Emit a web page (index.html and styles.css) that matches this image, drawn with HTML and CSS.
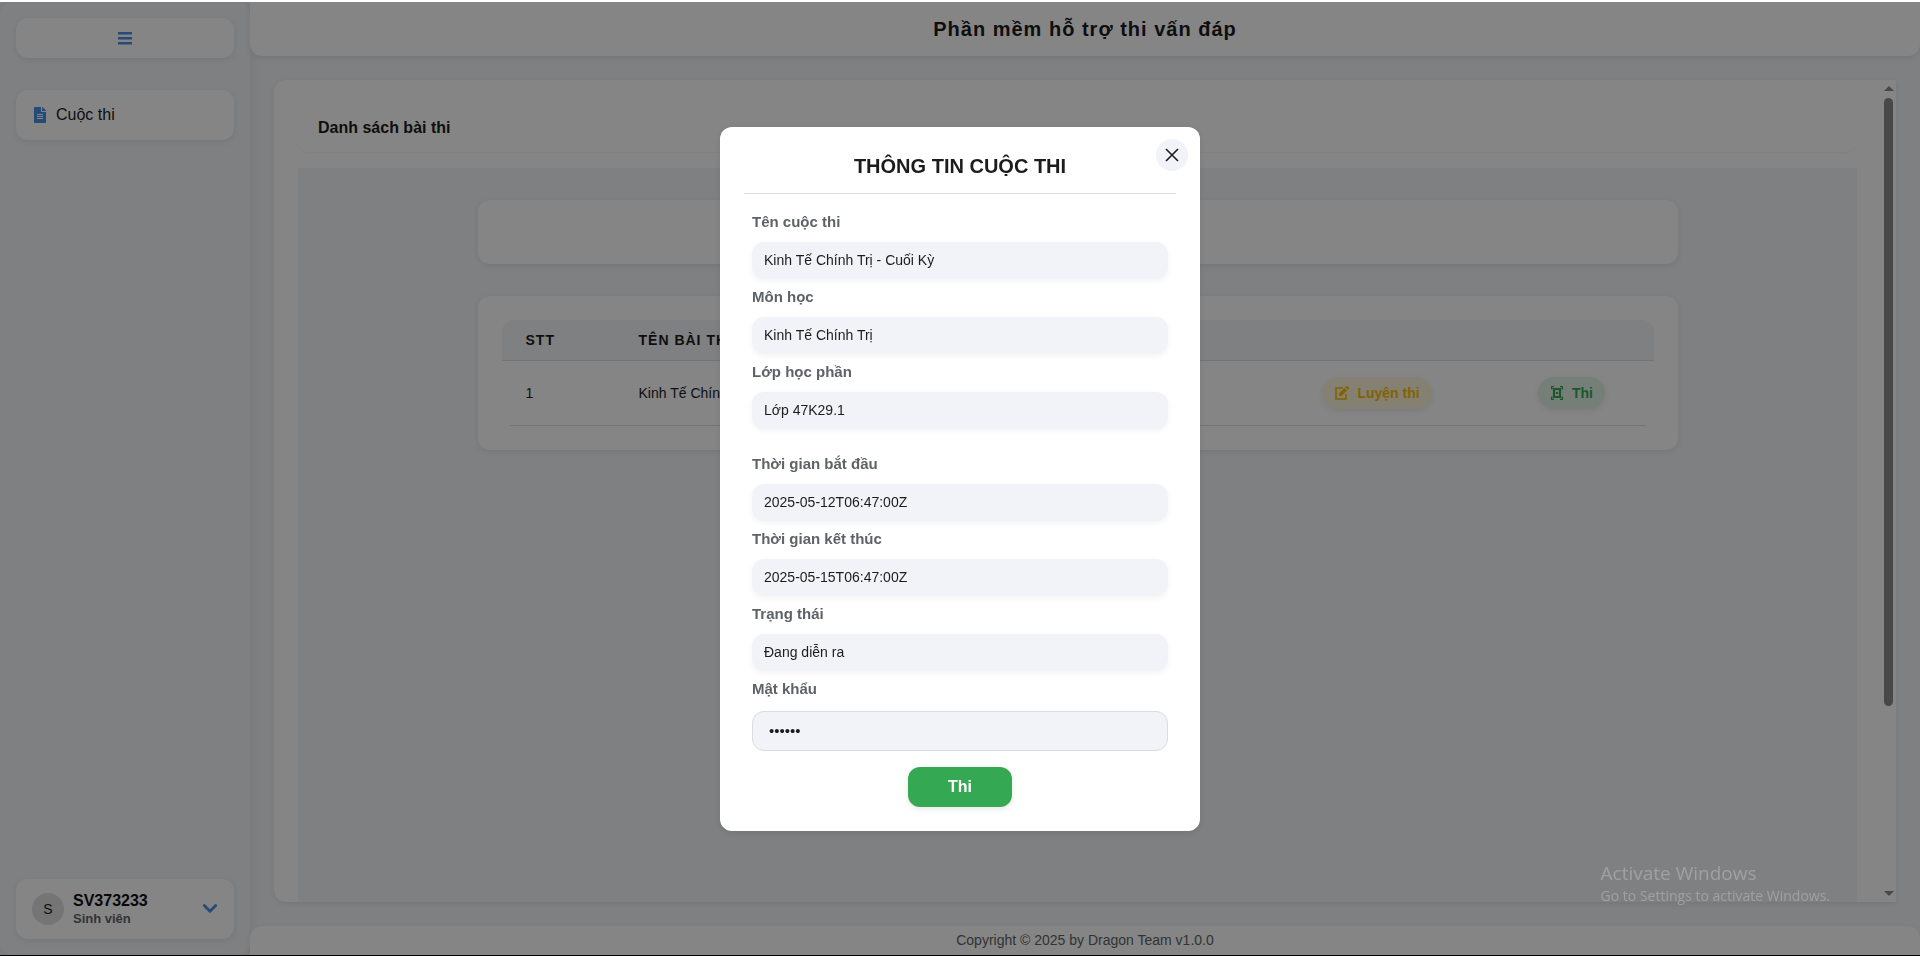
FILE: index.html
```html
<!DOCTYPE html>
<html lang="vi">
<head>
<meta charset="utf-8">
<title>Phần mềm hỗ trợ thi vấn đáp</title>
<link rel="stylesheet" href="styles.css">
</head>
<body>
<div class="app">
  <aside class="sidebar">
    <button class="menu-toggle" type="button" aria-label="Menu">
      <svg class="menu-icon" viewBox="0 0 14 14" aria-hidden="true"><path d="M0 1h14v2.400H0zM0 6h14v2.400H0zM0 11h14v2.400H0z" fill="currentColor"/></svg>
    </button>
    <nav class="nav">
      <a class="nav-link" href="#">
        <svg class="nav-icon" viewBox="0 0 384 512" aria-hidden="true"><path fill="currentColor" d="M224 136V0H24C10.700 0 0 10.700 0 24v464c0 13.300 10.700 24 24 24h336c13.300 0 24-10.700 24-24V160H248c-13.200 0-24-10.800-24-24zm64 236c0 6.600-5.400 12-12 12H108c-6.600 0-12-5.400-12-12v-8c0-6.600 5.400-12 12-12h168c6.600 0 12 5.400 12 12v8zm0-64c0 6.600-5.400 12-12 12H108c-6.600 0-12-5.400-12-12v-8c0-6.600 5.400-12 12-12h168c6.600 0 12 5.400 12 12v8zm0-72v8c0 6.600-5.400 12-12 12H108c-6.600 0-12-5.400-12-12v-8c0-6.600 5.400-12 12-12h168c6.600 0 12 5.400 12 12zm96-114.100v6.100H256V0h6.100c6.400 0 12.500 2.500 17 7l97.900 98c4.500 4.500 7 10.600 7 16.900z"/></svg>
        <span>Cuộc thi</span>
      </a>
    </nav>
    <button class="user-card" type="button">
      <span class="avatar">S</span>
      <span class="user-text">
        <span class="user-name">SV373233</span>
        <span class="user-role">Sinh viên</span>
      </span>
      <svg class="chevron" viewBox="0 0 14 10" aria-hidden="true"><path d="M2 2l5 5 5-5" fill="none" stroke="currentColor" stroke-width="2.500" stroke-linecap="round" stroke-linejoin="round"/></svg>
    </button>
  </aside>
  <div class="page">
    <header class="topbar"><h1 class="app-title">Phần mềm hỗ trợ thi vấn đáp</h1></header>
    <main class="content">
      <div class="panel">
        <h2 class="panel-title">Danh sách bài thi</h2>
        <div class="board">
          <section class="card filter-card"></section>
          <section class="card table-card">
            <table class="exam-table">
              <thead>
                <tr><th class="col-no">STT</th><th>TÊN BÀI THI</th><th class="col-action"></th><th class="col-action"></th></tr>
              </thead>
              <tbody>
                <tr>
                  <td>1</td>
                  <td>Kinh Tế Chính Trị - Cuối Kỳ</td>
                  <td class="action">
                    <button class="pill pill-practice" type="button">
                      <svg class="pill-icon" viewBox="0 0 14 14" aria-hidden="true"><path d="M8 2H1v11h10V8" fill="none" stroke="currentColor" stroke-width="1.600"/><path d="M4 10V7.500L9.500 2 12 4.500 6.500 10zM10.200 1.300L11.300.2a.8.8 0 011.100 0l1.400 1.400a.8.8 0 010 1.100l-1.100 1.100z" fill="currentColor"/></svg>
                      Luyện thi
                    </button>
                  </td>
                  <td class="action">
                    <button class="pill pill-exam" type="button">
                      <svg class="pill-icon" viewBox="0 0 14 14" aria-hidden="true"><g fill="none" stroke="currentColor"><path d="M1.600 3.500V.7h2.400M10 .7h2.400v2.800M12.400 10.500v2.800H10M4 13.300H1.600v-2.800" stroke-width="1.300"/><path d="M4 3h6v8H4z" stroke-width="2.200"/></g><path d="M2 2l3 2-1 1zM12 2L9 4l1 1zM2 12l3-2-1-1zM12 12l-3-2 1-1zM6 6h2v2H6z" fill="currentColor"/></svg>
                      Thi
                    </button>
                  </td>
                </tr>
              </tbody>
            </table>
          </section>
        </div>
        <div class="scrollbar" aria-hidden="true">
          <span class="arrow arrow-up"></span><span class="thumb"></span><span class="arrow arrow-down"></span>
        </div>
      </div>
    </main>
    <footer class="footer">Copyright © 2025 by Dragon Team v1.0.0</footer>
  </div>
</div>
<div class="overlay">
  <form class="modal" role="dialog" aria-modal="true" aria-labelledby="modal-title">
    <button class="close" type="button" aria-label="Đóng">
      <svg class="close-icon" viewBox="0 0 14 14" aria-hidden="true"><path d="M1 1l12 12M13 1L1 13" stroke="currentColor" stroke-width="1.600" fill="none"/></svg>
    </button>
    <h2 class="modal-title" id="modal-title">THÔNG TIN CUỘC THI</h2>
    <div class="fields">
      <dl class="group">
        <dt>Tên cuộc thi</dt><dd>Kinh Tế Chính Trị - Cuối Kỳ</dd>
        <dt>Môn học</dt><dd>Kinh Tế Chính Trị</dd>
        <dt>Lớp học phần</dt><dd>Lớp 47K29.1</dd>
      </dl>
      <dl class="group">
        <dt>Thời gian bắt đầu</dt><dd>2025-05-12T06:47:00Z</dd>
        <dt>Thời gian kết thúc</dt><dd>2025-05-15T06:47:00Z</dd>
        <dt>Trạng thái</dt><dd>Đang diễn ra</dd>
      </dl>
      <label class="password-label" for="password">Mật khẩu</label>
      <input class="password" id="password" type="password" value="123456">
    </div>
    <button class="submit" type="button">Thi</button>
  </form>
</div>
<div class="watermark"><div class="watermark-title">Activate Windows</div><div>Go to Settings to activate Windows.</div></div>
</body>
</html>
```
FILE: styles.css
```css
* { box-sizing: border-box; }
body {
  margin: 0;
  font-family: "Liberation Sans", Arial, sans-serif;
  font-size: 14px;
  color: #1c1c1c;
  background: #f3f5f8;
}
button, input { font: inherit; color: inherit; border: 0; margin: 0; }
h1, h2, dl, dd { margin: 0; }
.app {
  display: flex;
  height: 100vh;
  border-top: 2px solid #fff;
  border-bottom: 1px solid #000;
  overflow: hidden;
}
.sidebar {
  display: flex;
  flex-direction: column;
  flex: 0 0 250px;
  padding: 16px;
  border-radius: 12px;
  box-shadow: 0 0 12px rgba(0, 0, 0, .08);
}
.menu-toggle, .nav-link, .user-card {
  background: #fff;
  border-radius: 12px;
  box-shadow: 0 2px 6px rgba(0, 0, 0, .08);
}
.menu-toggle {
  display: flex;
  align-items: center;
  justify-content: center;
  height: 40px;
  color: #4a90e2;
}
.menu-icon { width: 14px; height: 14px; }
.nav { flex: 1; padding-top: 32px; }
.nav-link {
  display: flex;
  align-items: center;
  gap: 10px;
  height: 50px;
  padding: 0 18px;
  font-size: 16px;
  color: inherit;
  text-decoration: none;
}
.nav-icon { width: 12px; height: 16px; color: #4a90e2; }
.user-card {
  display: flex;
  align-items: center;
  gap: 9px;
  height: 60px;
  padding: 0 16px;
  text-align: left;
}
.avatar {
  display: grid;
  place-items: center;
  width: 32px;
  height: 32px;
  border-radius: 50%;
  background: #e0e0e0;
}
.user-text { display: flex; flex-direction: column; flex: 1; font-weight: 700; }
.user-name { font-size: 16px; line-height: 18px; color: #111; }
.user-role { font-size: 13px; line-height: 17px; color: #5f6368; }
.chevron { width: 16px; height: 12px; color: #4a90e2; }
.page { display: flex; flex-direction: column; flex: 1; min-width: 0; }
.topbar, .footer {
  display: flex;
  align-items: center;
  justify-content: center;
  background: #fff;
  box-shadow: 0 2px 6px rgba(0, 0, 0, .08);
}
.topbar { flex: 0 0 54px; border-radius: 0 0 12px 12px; }
.app-title { font-size: 20px; letter-spacing: 1px; }
.footer { flex: 0 0 29px; padding-bottom: 2px; border-radius: 12px 12px 0 0; color: #5f6368; }
.content { flex: 1; min-height: 0; padding: 24px; }
.panel {
  position: relative;
  display: flex;
  flex-direction: column;
  height: 100%;
  padding: 24px 39px 0 24px;
  background: #fff;
  border-radius: 12px 0 0 12px;
  box-shadow: 0 2px 6px rgba(0, 0, 0, .08);
}
.panel-title {
  display: flex;
  align-items: center;
  height: 48px;
  margin-bottom: 16px;
  padding: 0 20px;
  font-size: 16px;
  border-radius: 12px;
  box-shadow: 0 1px 2px rgba(0, 0, 0, .04);
}
.board { flex: 1; padding: 32px 24px; background: #f3f5f8; }
.card {
  max-width: 1200px;
  margin: 0 auto 32px;
  padding: 24px;
  background: #fff;
  border-radius: 12px;
  box-shadow: 0 2px 6px rgba(0, 0, 0, .08);
}
.filter-card { height: 64px; }
.exam-table { width: 100%; border-collapse: separate; border-spacing: 0; table-layout: fixed; }
.exam-table th {
  height: 41px;
  padding: 0 24px;
  text-align: left;
  font-size: 14px;
  letter-spacing: 1px;
  background: #f3f5f8;
  border-bottom: 1px solid #dadce0;
}
.exam-table th:first-child { border-top-left-radius: 12px; }
.exam-table th:last-child { border-top-right-radius: 12px; }
.exam-table td {
  height: 65px;
  padding: 0 24px 2px;
  background: linear-gradient(#dadce0, #dadce0) bottom / 100% 1px no-repeat;
}
.exam-table td:first-child { background-position: right bottom; background-size: calc(100% - 8px) 1px; }
.exam-table td:last-child { background-position: left bottom; background-size: calc(100% - 8px) 1px; }
.exam-table .col-no { width: 113px; }
.exam-table .col-action { width: 194px; }
.exam-table .action { padding: 0 8px 2px 38px; text-align: center; }
.pill {
  display: inline-flex;
  align-items: center;
  gap: 8px;
  height: 32px;
  padding: 0 12px;
  border-radius: 16px;
  font-weight: 700;
  box-shadow: 0 2px 6px rgba(0, 0, 0, .08);
}
.pill-icon { width: 14px; height: 14px; }
.pill-practice { color: #fbbc05; background: #fef5da; }
.pill-exam { color: #34a853; background: #e1f3e5; }
.scrollbar {
  position: absolute;
  inset: 0 0 0 auto;
  display: flex;
  flex-direction: column;
  align-items: center;
  width: 15px;
  padding: 6px 0;
}
.arrow { border: 5px solid transparent; }
.arrow-up { border-top: 0; border-bottom-color: #8b8b8b; }
.arrow-down { border-bottom: 0; border-top-color: #8b8b8b; margin-top: auto; }
.thumb { width: 9px; height: 75%; margin-top: 7px; border-radius: 5px; background: #8b8b8b; }
.overlay {
  position: fixed;
  inset: 2px 0 1px;
  display: grid;
  place-items: center;
  background: rgba(0, 0, 0, .48);
}
.modal {
  position: relative;
  display: flex;
  flex-direction: column;
  width: 480px;
  padding: 24px;
  background: #fff;
  border-radius: 12px;
  box-shadow: 0 2px 8px rgba(0, 0, 0, .1);
}
.close {
  position: absolute;
  top: 12px;
  right: 12px;
  display: grid;
  place-items: center;
  width: 32px;
  height: 32px;
  padding: 0;
  border-radius: 50%;
  background: #f2f3f8;
}
.close-icon { width: 14px; height: 14px; }
.modal-title {
  padding-bottom: 12px;
  border-bottom: 1px solid #dadce0;
  font-size: 20px;
  line-height: 30px;
  text-align: center;
}
.fields { display: flex; flex-direction: column; padding: 18px 8px 16px; }
.group { margin-bottom: 17px; }
.group + .group { margin-bottom: 0; }
dt, .password-label {
  padding: 1px 0 12px;
  font-size: 15px;
  font-weight: 700;
  line-height: 17px;
  color: #5f6368;
}
.password-label { padding-bottom: 14px; }
dd {
  margin-bottom: 8px;
  padding: 0 12px;
  line-height: 37px;
  border-radius: 12px;
  background: #f2f3f8;
  box-shadow: 0 2px 6px rgba(0, 0, 0, .05);
}
.password {
  width: 100%;
  height: 40px;
  padding: 0 16px;
  border: 1px solid #dadce0;
  border-radius: 12px;
  font-size: 15px;
  background: #f2f3f8;
}
.submit {
  align-self: center;
  width: 104px;
  height: 40px;
  border-radius: 12px;
  font-size: 16px;
  font-weight: 700;
  color: #fff;
  background: #34a853;
  box-shadow: 0 2px 6px rgba(0, 0, 0, .1);
}
.watermark {
  position: fixed;
  right: 90px;
  bottom: 49px;
  font: 14px/22px "Open Sans", sans-serif;
  color: rgba(255, 255, 255, .25);
}
.watermark-title { font-size: 19px; line-height: 24px; }
```
